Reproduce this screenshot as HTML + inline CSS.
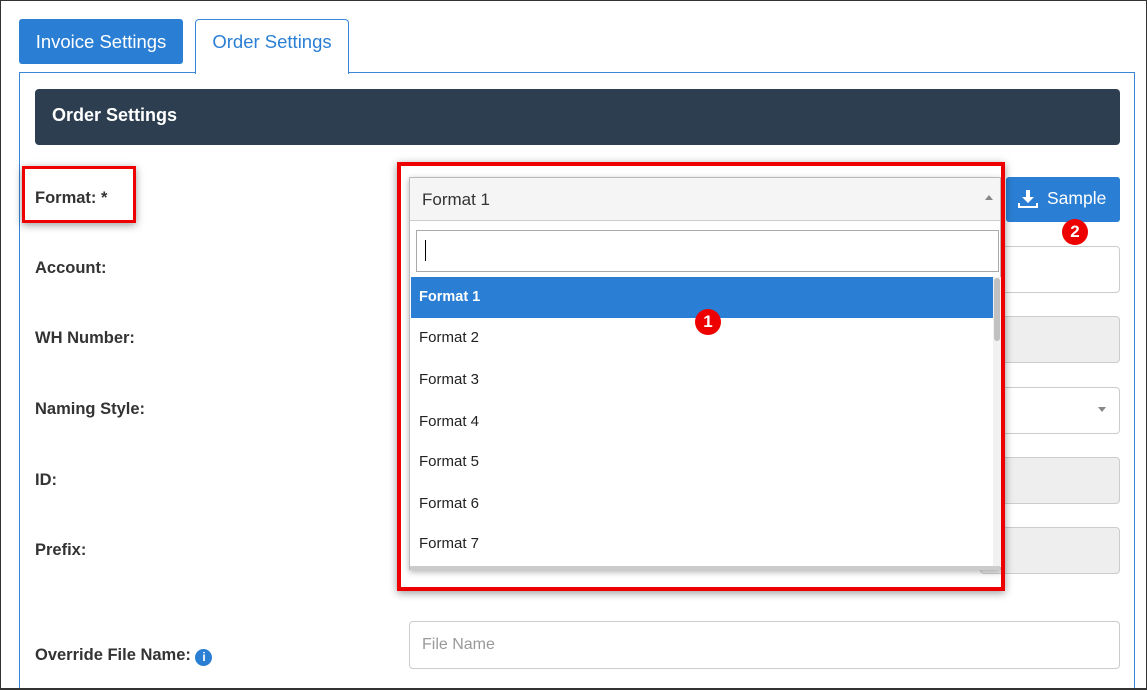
<!DOCTYPE html>
<html><head><meta charset="utf-8"><style>
*{box-sizing:border-box;margin:0;padding:0}
html,body{width:1147px;height:690px;overflow:hidden;background:#fff}
#w{position:relative;width:1147px;height:690px;overflow:hidden;font-family:"Liberation Sans",Arial,sans-serif}
.a{position:absolute}
.lbl{position:absolute;left:35px;font-weight:bold;font-size:16.5px;color:#333}
.inp{position:absolute;border:1px solid #ccc;border-radius:4px;background:#fff}
.gray{background:#eee}
.opt{position:absolute;left:419px;font-size:15px;color:#222}
.badge{position:absolute;width:26px;height:26px;border-radius:50%;background:#e00;color:#fff;font-weight:bold;font-size:17px;text-align:center;line-height:26px}
</style></head><body><div id="w">
<div class="a" style="left:19px;top:19px;width:164px;height:45px;background:#2a7fd4;border-radius:3px;color:#fff;font-size:18.5px;line-height:45px;text-align:center">Invoice Settings</div>
<div class="a" style="left:19px;top:72px;width:1116px;height:640px;border:1px solid #3a86d6"></div>
<div class="a" style="left:195px;top:19px;width:154px;height:55px;background:#fff;border:1px solid #3a86d6;border-bottom:none;border-radius:4px 4px 0 0;color:#2a7fd4;font-size:18.5px;line-height:44px;text-align:center">Order Settings</div>
<div class="a" style="left:35px;top:89px;width:1085px;height:56px;background:#2c3e50;border-radius:4px;color:#fff;font-size:18px;font-weight:bold;line-height:52px;padding-left:17px">Order Settings</div>

<div class="lbl" style="top:189px">Format: *</div>
<div class="lbl" style="top:259px">Account:</div>
<div class="lbl" style="top:329px">WH Number:</div>
<div class="lbl" style="top:400px">Naming Style:</div>
<div class="lbl" style="top:471px">ID:</div>
<div class="lbl" style="top:541px">Prefix:</div>
<div class="lbl" style="top:646px">Override File Name: <span style="display:inline-block;width:17px;height:17px;border-radius:50%;background:#2a7fd4;color:#fff;font-size:12px;text-align:center;line-height:17px;vertical-align:-1px">i</span></div>
<div class="a" style="left:22px;top:166px;width:114px;height:57px;border:3px solid #e00;box-shadow:0 2px 8px rgba(0,0,0,.4)"></div>

<div class="inp" style="left:980px;top:246px;width:140px;height:47px"></div>
<div class="inp gray" style="left:980px;top:316px;width:140px;height:47px"></div>
<div class="inp" style="left:980px;top:387px;width:140px;height:47px"></div>
<div class="a" style="left:1098px;top:407px;border-left:4px solid transparent;border-right:4px solid transparent;border-top:5px solid #888"></div>
<div class="inp gray" style="left:980px;top:457px;width:140px;height:47px"></div>
<div class="inp gray" style="left:980px;top:527px;width:140px;height:47px"></div>
<div class="inp" style="left:409px;top:621px;width:711px;height:48px;color:#999;font-size:16px;line-height:46px;padding-left:12px">File Name</div>

<div class="a" style="left:1006px;top:177px;width:114px;height:45px;background:#2a7fd4;border-radius:3px;color:#fff;font-size:17.5px;line-height:43px;padding-left:41px">Sample</div>
<svg class="a" style="left:1018px;top:190px" width="20" height="18" viewBox="0 0 20 18"><path d="M8 0h4v7h4l-6 6-6-6h4z" fill="#fff"/><path d="M0 13h2v3h16v-3h2v5H0z" fill="#fff"/></svg>
<div class="badge" style="left:1062px;top:219px">2</div>

<div class="a" style="left:409px;top:177px;width:592px;height:393px;background:#fff;border:1px solid #bbb;box-shadow:0 2px 6px rgba(0,0,0,.3)"></div>
<div class="a" style="left:410px;top:178px;width:590px;height:43px;background:#f5f5f5;border-bottom:1px solid #ccc;font-size:17px;color:#333;line-height:43px;padding-left:12px">Format 1</div>
<div class="a" style="left:985px;top:195px;border-left:4px solid transparent;border-right:4px solid transparent;border-bottom:5px solid #888"></div>
<div class="a" style="left:416px;top:230px;width:583px;height:42px;border:1px solid #aaa;background:#fff"></div>
<div class="a" style="left:425px;top:240px;width:1px;height:21px;background:#000"></div>
<div class="a" style="left:411px;top:277px;width:582px;height:41px;background:#2a7fd4"></div>
<div class="opt" style="top:289px;color:#fff;font-weight:bold;font-size:14.5px">Format 1</div>
<div class="opt" style="top:329px">Format 2</div>
<div class="opt" style="top:371px">Format 3</div>
<div class="opt" style="top:413px">Format 4</div>
<div class="opt" style="top:453px">Format 5</div>
<div class="opt" style="top:495px">Format 6</div>
<div class="opt" style="top:535px">Format 7</div>
<div class="a" style="left:993px;top:277px;width:8px;height:290px;background:#f1f1f1"></div>
<div class="a" style="left:994px;top:278px;width:6px;height:63px;background:#c1c1c1;border-radius:3px"></div>
<div class="a" style="left:410px;top:566px;width:590px;height:4px;background:#ccc"></div>
<div class="a" style="left:397px;top:162px;width:608px;height:429px;border:4px solid #e00;box-shadow:0 2px 8px rgba(0,0,0,.4)"></div>
<div class="badge" style="left:695px;top:309px">1</div>
<div class="a" style="left:0;top:0;width:1147px;height:690px;border:1px solid #333;border-bottom:2px solid #333"></div>
</div></body></html>
